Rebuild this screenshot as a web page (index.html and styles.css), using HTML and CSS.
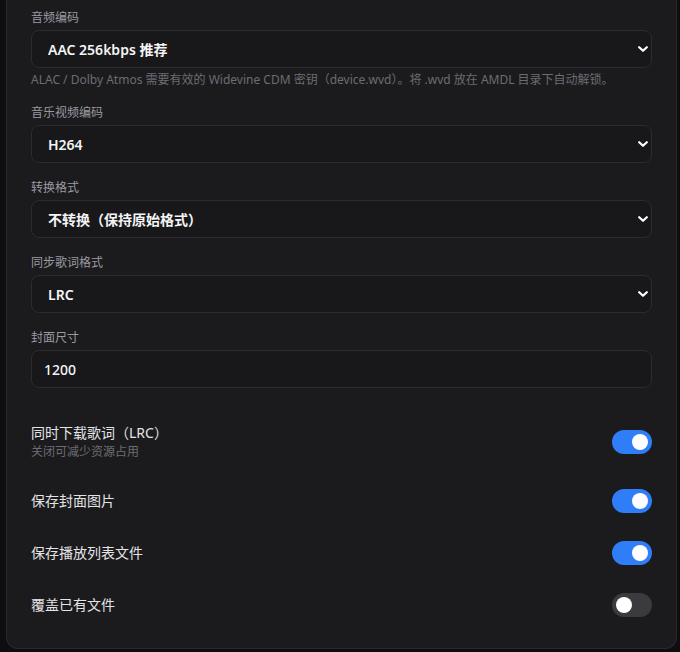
FILE: index.html
```html
<!DOCTYPE html>
<html lang="zh-CN">
<head>
<meta charset="utf-8">
<title>设置</title>
<link rel="stylesheet" href="styles.css">
</head>
<body>
<div class="card">
  <div class="fields">
    <div class="field">
      <label class="label">音频编码</label>
      <div class="select-wrap">
        <select class="control select"><option>AAC 256kbps 推荐</option></select>
        <svg class="chev" width="10" height="6" viewBox="0 0 10 6"><path d="M1.2 1.2 L5 4.8 L8.8 1.2" fill="none" stroke="#fff" stroke-width="2.2" stroke-linecap="round" stroke-linejoin="round"/></svg>
      </div>
      <div class="hint">ALAC / Dolby Atmos 需要有效的 Widevine CDM 密钥（device.wvd）。将 .wvd 放在 AMDL 目录下自动解锁。</div>
    </div>
    <div class="field">
      <label class="label">音乐视频编码</label>
      <div class="select-wrap">
        <select class="control select"><option>H264</option></select>
        <svg class="chev" width="10" height="6" viewBox="0 0 10 6"><path d="M1.2 1.2 L5 4.8 L8.8 1.2" fill="none" stroke="#fff" stroke-width="2.2" stroke-linecap="round" stroke-linejoin="round"/></svg>
      </div>
    </div>
    <div class="field">
      <label class="label">转换格式</label>
      <div class="select-wrap">
        <select class="control select"><option>不转换（保持原始格式）</option></select>
        <svg class="chev" width="10" height="6" viewBox="0 0 10 6"><path d="M1.2 1.2 L5 4.8 L8.8 1.2" fill="none" stroke="#fff" stroke-width="2.2" stroke-linecap="round" stroke-linejoin="round"/></svg>
      </div>
    </div>
    <div class="field">
      <label class="label">同步歌词格式</label>
      <div class="select-wrap">
        <select class="control select"><option>LRC</option></select>
        <svg class="chev" width="10" height="6" viewBox="0 0 10 6"><path d="M1.2 1.2 L5 4.8 L8.8 1.2" fill="none" stroke="#fff" stroke-width="2.2" stroke-linecap="round" stroke-linejoin="round"/></svg>
      </div>
    </div>
    <div class="field">
      <label class="label">封面尺寸</label>
      <input class="control input" type="text" value="1200">
    </div>
  </div>
  <div class="toggles">
    <div class="row">
      <div class="row-text">
        <div class="row-title">同时下载歌词（LRC）</div>
        <div class="row-sub">关闭可减少资源占用</div>
      </div>
      <span class="switch on"><span class="knob"></span></span>
    </div>
    <div class="row">
      <div class="row-text"><div class="row-title">保存封面图片</div></div>
      <span class="switch on"><span class="knob"></span></span>
    </div>
    <div class="row">
      <div class="row-text"><div class="row-title">保存播放列表文件</div></div>
      <span class="switch on"><span class="knob"></span></span>
    </div>
    <div class="row">
      <div class="row-text"><div class="row-title">覆盖已有文件</div></div>
      <span class="switch"><span class="knob"></span></span>
    </div>
  </div>
</div>
</body>
</html>
```
FILE: styles.css
```css
html, body {
  margin: 0;
  padding: 0;
  background: #0e0e10;
  height: 652px;
  overflow: hidden;
}
body {
  font-family: "Noto Sans", "Noto Sans CJK SC", sans-serif;
  color: #e4e4e7;
}
.card {
  box-sizing: border-box;
  margin-left: 6px;
  width: 671px;
  background: #1b1b1e;
  border: 1px solid #2a2a2e;
  border-top: none;
  border-radius: 0 0 12px 12px;
  padding: 8px 24px 17px 24px;
}
.fields {
  display: flex;
  flex-direction: column;
  gap: 15px;
}
.field {
  display: flex;
  flex-direction: column;
}
.label {
  font-size: 12px;
  line-height: 20px;
  color: #9a9aa1;
  margin-bottom: 2px;
}
.select-wrap {
  position: relative;
}
.control {
  box-sizing: border-box;
  width: 100%;
  height: 38px;
  background: #18181b;
  border: 1px solid #2b2b30;
  border-radius: 8px;
  color: #f4f4f5;
  font-family: "Noto Sans", "Noto Sans CJK SC", sans-serif;
  font-size: 14px;
  outline: none;
  margin: 0;
}
.select {
  appearance: none;
  -webkit-appearance: none;
  padding: 0 30px 0 16px;
  font-weight: 600;
}
.input {
  padding: 0 12px;
  font-weight: 500;
}
.chev {
  position: absolute;
  right: 4px;
  top: 16px;
  pointer-events: none;
}
.hint {
  margin-top: 4px;
  font-size: 12px;
  line-height: 16px;
  color: #6c6c73;
}
.toggles {
  margin-top: 21px;
  display: flex;
  flex-direction: column;
}
.row {
  display: flex;
  align-items: center;
  justify-content: space-between;
  padding: 14px 0;
}
.row-title {
  font-size: 14px;
  line-height: 20px;
  color: #e4e4e7;
}
.row-sub {
  font-size: 12px;
  line-height: 18px;
  color: #6c6c73;
}
.switch {
  position: relative;
  width: 40px;
  height: 24px;
  border-radius: 12px;
  background: #3a3a3f;
  flex-shrink: 0;
}
.switch.on {
  background: #2f7ef7;
}
.knob {
  position: absolute;
  top: 4px;
  left: 4px;
  width: 16px;
  height: 16px;
  border-radius: 50%;
  background: #ffffff;
}
.switch.on .knob {
  left: 20px;
}
```
